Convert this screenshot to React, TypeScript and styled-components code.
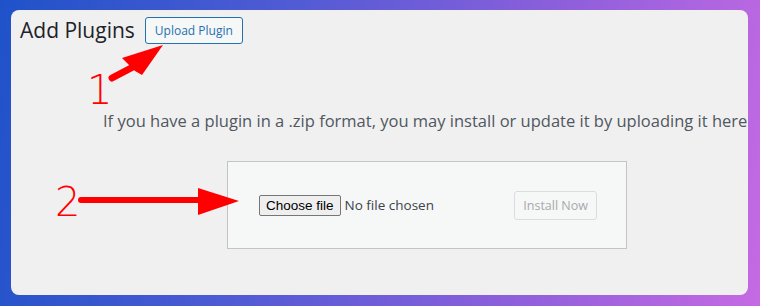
import React from "react";
import styled, { createGlobalStyle } from "styled-components";

const GlobalStyle = createGlobalStyle`
   html, body {
      margin: 0;
      padding: 0;
   }

   body {
      font-family: "Open Sans", "Noto Sans", sans-serif;
   }
`;

const Page = styled.div`
   width: 760px;
   height: 306px;
   box-sizing: border-box;
   padding: 10px 12px 11px 11px;
   background: linear-gradient(100deg, #1f52c9 0%, #4f5bd4 35%, #8f5fdc 70%, #c56ae3 100%);
   overflow: hidden;
`;

const Panel = styled.main`
   position: relative;
   height: 100%;
   border-radius: 8px;
   background: #f0f0f1;
   overflow: hidden;
   display: flex;
   flex-direction: column;
`;

const Header = styled.header`
   display: flex;
   align-items: center;
   gap: 10px;
   padding: 7px 9px 0;
`;

const Title = styled.h1`
   margin: 0;
   font-size: 21px;
   font-weight: 400;
   line-height: 27px;
   color: #1d2327;
`;

const PageTitleAction = styled.button`
   height: 27px;
   padding: 0 9px;
   border: 1px solid #2271b1;
   border-radius: 3px;
   background: #f6f7f7;
   color: #2271b1;
   font-family: "Open Sans", "Noto Sans", sans-serif;
   font-size: 12px;
   line-height: 25px;
   cursor: pointer;
`;

const Description = styled.p`
   margin: 66px 0 0 92px;
   font-size: 16.5px;
   line-height: 22px;
   color: #50575e;
   white-space: nowrap;
`;

const UploadForm = styled.form`
   display: flex;
   align-items: center;
   justify-content: space-between;
   box-sizing: border-box;
   width: 400px;
   height: 88px;
   margin: 29px 0 0 216px;
   padding: 0 29px 0 31px;
   border: 1px solid #c3c4c7;
   background: #f6f7f7;
`;

const FileField = styled.label`
   display: flex;
   align-items: center;
   gap: 4px;
`;

const FileButton = styled.span`
   box-sizing: border-box;
   height: 21px;
   padding: 0 6px;
   border: 1px solid #767676;
   border-radius: 2px;
   background: #efefef;
   color: #000;
   font-family: "Liberation Sans", Arial, sans-serif;
   font-size: 13.5px;
   line-height: 19px;
`;

const FileName = styled.span`
   color: #3c434a;
   font-size: 13.5px;
`;

const SubmitButton = styled.button`
   box-sizing: border-box;
   height: 29px;
   padding: 0 8px;
   border: 1px solid #dcdcde;
   border-radius: 3px;
   background: #f6f7f7;
   color: #a7aaad;
   font-family: "Open Sans", "Noto Sans", sans-serif;
   font-size: 12.5px;
   line-height: 27px;
`;

const Annotations = styled.svg`
   position: absolute;
   inset: 0;
   width: 100%;
   height: 100%;
   pointer-events: none;
`;

const StepNumber = styled.span<{ $x: number; $y: number }>`
   position: absolute;
   left: ${({ $x }) => $x}px;
   top: ${({ $y }) => $y}px;
   font-family: "DejaVu Sans", sans-serif;
   font-weight: 200;
   font-size: 40px;
   line-height: 1;
   color: #ff0000;
`;

const RED = "#ff0000";

const App: React.FC = () => {
   return (
      <>
         <GlobalStyle />
         <Page>
            <Panel>
               <Header>
                  <Title>Add Plugins</Title>
                  <PageTitleAction type="button">Upload Plugin</PageTitleAction>
               </Header>
               <Description>
                  If you have a plugin in a .zip format, you may install or update it by uploading it here.
               </Description>
               <UploadForm onSubmit={(e) => e.preventDefault()}>
                  <FileField>
                     <FileButton>Choose file</FileButton>
                     <FileName>No file chosen</FileName>
                  </FileField>
                  <SubmitButton type="submit" disabled>
                     Install Now
                  </SubmitButton>
               </UploadForm>

               <Annotations viewBox="0 0 737 285">
                  {/* arrow 1 -> upload button */}
                  <line x1="101" y1="68" x2="122" y2="57" stroke={RED} strokeWidth="7" strokeLinecap="round" />
                  <polygon points="152,35 111,48 118,55 124,61 131,65" fill={RED} />
                  {/* arrow 2 -> file field */}
                  <line x1="70" y1="190" x2="190" y2="190" stroke={RED} strokeWidth="6" strokeLinecap="round" />
                  <polygon points="187,178 228,191 187,205" fill={RED} />
               </Annotations>
               <StepNumber $x={76} $y={60}>1</StepNumber>
               <StepNumber $x={44} $y={172}>2</StepNumber>
            </Panel>
         </Page>
      </>
   );
};

export default App;
